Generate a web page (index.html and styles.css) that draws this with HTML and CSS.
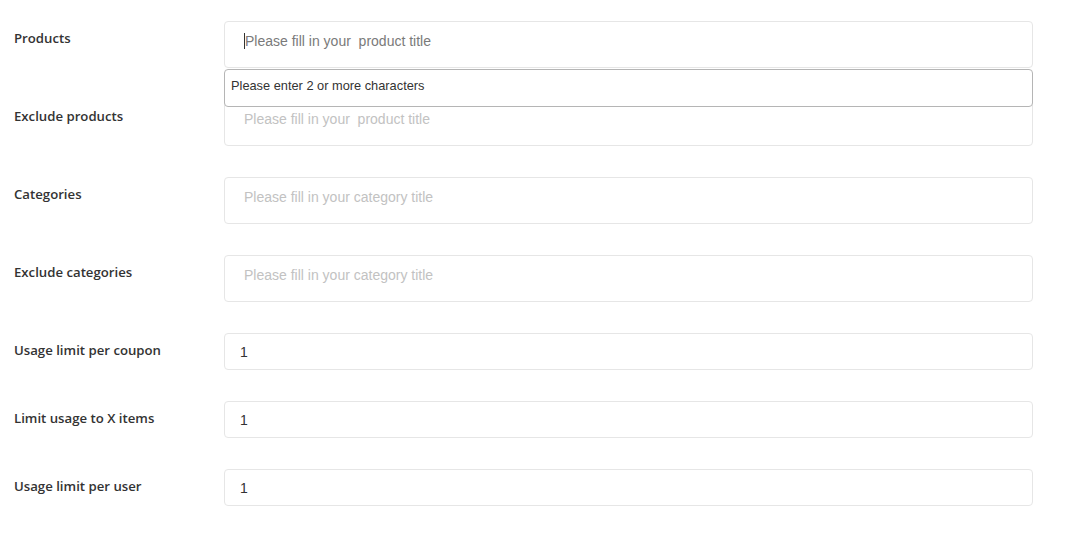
FILE: index.html
```html
<!DOCTYPE html>
<html>
<head>
<meta charset="utf-8">
<link rel="stylesheet" href="styles.css">
</head>
<body>
<div class="form">
  <div class="row top">
    <div class="label">Products</div>
    <div class="field">
      <div class="box tall focused"><span class="caret"></span><span class="ph dark">Please fill in your&nbsp; product title</span></div>
      <div class="dropdown">Please enter 2 or more characters</div>
    </div>
  </div>
  <div class="row">
    <div class="label">Exclude products</div>
    <div class="field"><div class="box tall"><span class="ph">Please fill in your&nbsp; product title</span></div></div>
  </div>
  <div class="row">
    <div class="label">Categories</div>
    <div class="field"><div class="box tall"><span class="ph">Please fill in your category title</span></div></div>
  </div>
  <div class="row">
    <div class="label">Exclude categories</div>
    <div class="field"><div class="box tall"><span class="ph">Please fill in your category title</span></div></div>
  </div>
  <div class="row">
    <div class="label">Usage limit per coupon</div>
    <div class="field"><div class="box num">1</div></div>
  </div>
  <div class="row">
    <div class="label">Limit usage to X items</div>
    <div class="field"><div class="box num">1</div></div>
  </div>
  <div class="row">
    <div class="label">Usage limit per user</div>
    <div class="field"><div class="box num">1</div></div>
  </div>
</div>
</body>
</html>
```
FILE: styles.css
```css
html, body {
  margin: 0;
  padding: 0;
  background: #ffffff;
}
.form {
  padding: 21px 0 0 14px;
  display: flex;
  flex-direction: column;
  gap: 31px;
  width: 1019px;
}
.row {
  display: flex;
  align-items: flex-start;
  position: relative;
}
.row.top {
  z-index: 2;
}
.label {
  width: 210px;
  flex: none;
  padding-top: 6.5px;
  font-family: "Open Sans", sans-serif;
  font-weight: 600;
  font-size: 13.2px;
  line-height: 20px;
  color: #333333;
}
.field {
  position: relative;
  width: 809px;
}
.box {
  box-sizing: border-box;
  border: 1px solid #e6e6e6;
  border-radius: 4px;
  background: #fff;
  font-family: "Liberation Sans", Arial, sans-serif;
  font-size: 14px;
}
.tall {
  height: 47px;
  padding: 11px 0 0 19px;
  line-height: 16px;
}
.ph {
  color: #c2c2c2;
}
.ph.dark {
  color: #7a7a7a;
}
.caret {
  display: inline-block;
  width: 1px;
  height: 16px;
  background: #333;
  vertical-align: -3px;
}
.num {
  height: 37px;
  padding: 0 0 0 15px;
  line-height: 36px;
  color: #333333;
}
.dropdown {
  position: absolute;
  left: 0;
  top: 48px;
  width: 809px;
  height: 38px;
  box-sizing: border-box;
  border: 1px solid #b5b5b5;
  border-radius: 4px;
  background: #fff;
  padding: 0 0 0 6px;
  font-family: "Liberation Sans", Arial, sans-serif;
  font-size: 12.8px;
  line-height: 32px;
  color: #333333;
}
```
